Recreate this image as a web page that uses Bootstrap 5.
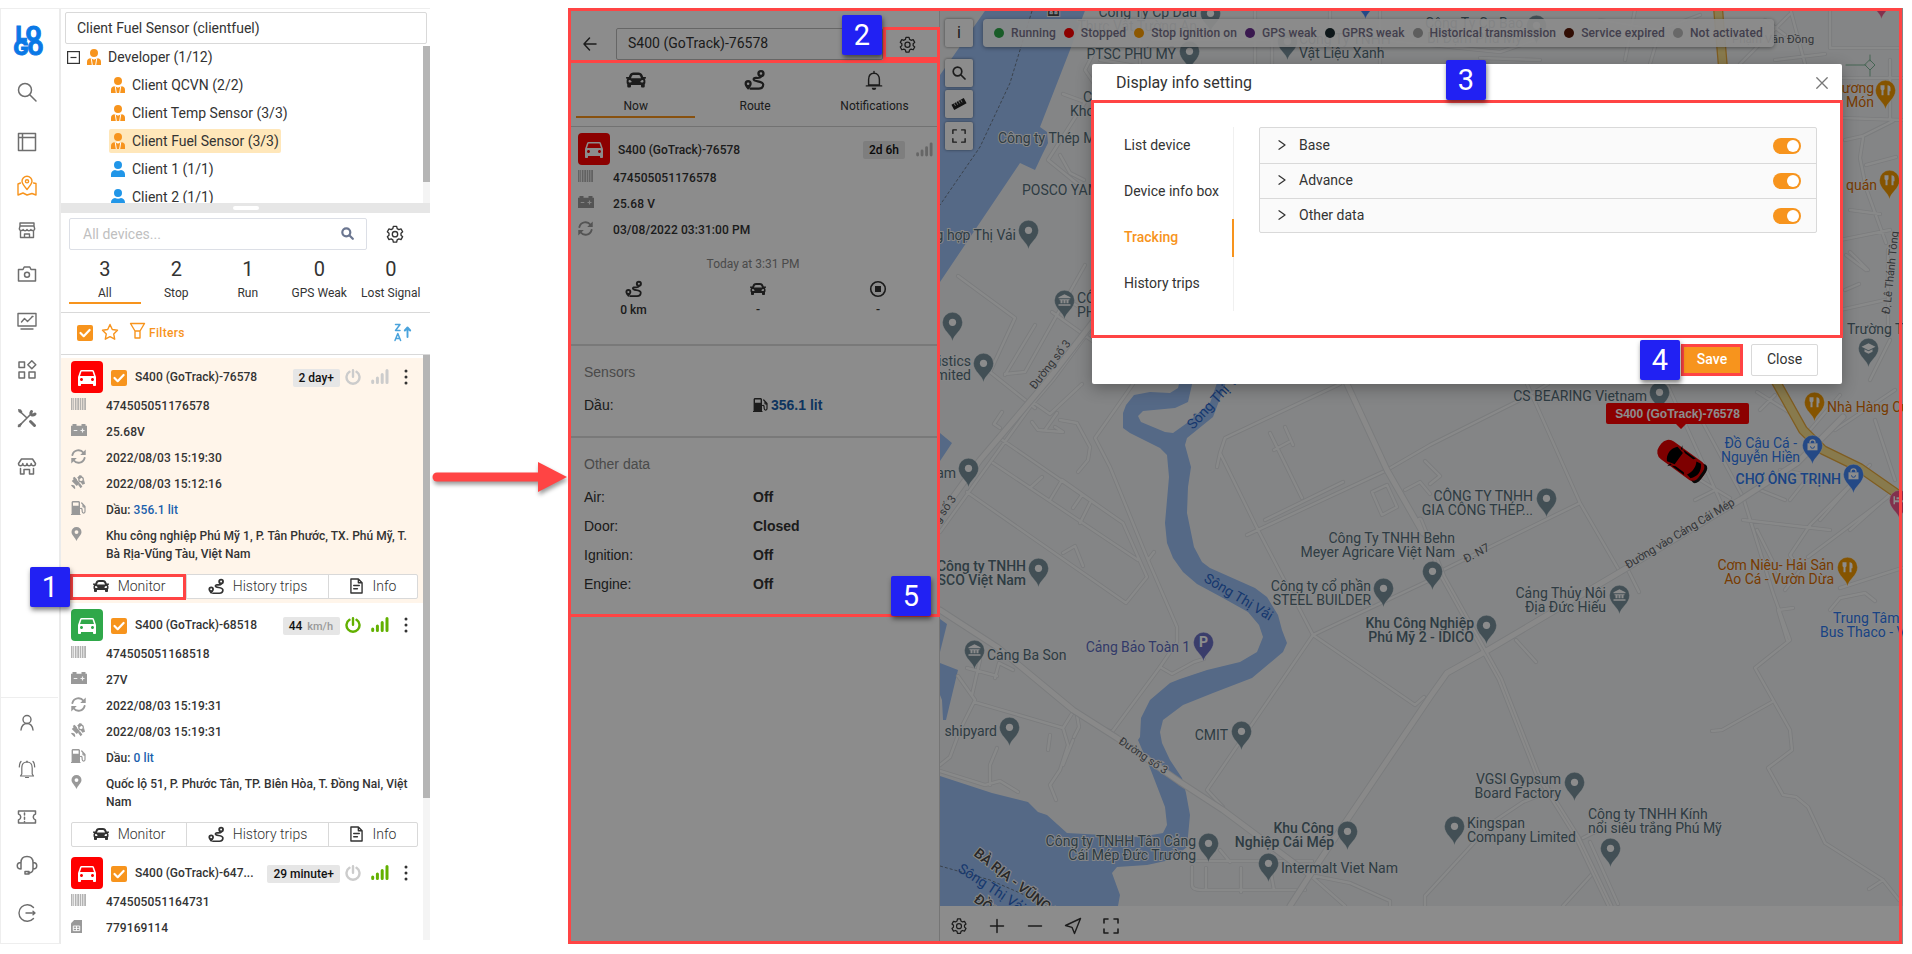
<!DOCTYPE html>
<html lang="en">
<head>
<meta charset="utf-8">
<title>Fleet monitor</title>
<meta name="viewport" content="width=device-width, initial-scale=1">
<link href="https://cdn.jsdelivr.net/npm/bootstrap@5.3.0/dist/css/bootstrap.min.css" rel="stylesheet">
<style>
body{font-family:Roboto,"Noto Sans",sans-serif;font-size:14px;line-height:22px;color:#333;background:#fff;width:1912px;height:954px;overflow:hidden;position:relative}
svg{display:block;flex:none}
.ln{fill:none;stroke:currentColor;stroke-linecap:round;stroke-linejoin:round}
.fleet-app{width:430px;height:936px;margin-top:8px;border-top:1px solid #eee}
.rail{width:61px;border-left:1px solid #eee;border-right:2px solid #ebebeb;border-bottom:1px solid #eee;color:#6e6e6e}
.rail-grid{display:grid;justify-items:center;align-items:end;width:52px}
.rail-top{grid-template-rows:46px 49px 50px 44px 44px 44px 47px 49px 48px 48px}
.rail-foot{grid-template-rows:36px 47px 48px 48px 48px;height:246px;border-top:1px solid #eee;width:57px;padding-right:5px;margin-top:auto;align-content:start}
.brand{font:800 20px/14px Inter,sans-serif;color:#0a78e6;letter-spacing:-.8px;-webkit-text-stroke:1px #0a78e6;text-align:center;margin-left:2px;width:32px}
.pane{width:369px}
.box-input{border:1px solid #d9d9d9;border-radius:2px;height:32px;line-height:30px;padding-left:11px}
.tree{height:158px}
.tree-row{height:28px;gap:7px}
.tree-sel{background:#ffe7ba;border-radius:2px;height:24px;gap:7px;padding:0 2px}
.tree-item{gap:7px;padding-left:2px}
.kid{padding-left:48px}
.thumb{width:7px;background:#b5b5b5}
.track{width:7px;background:#f4f4f4}
.split{height:10px;background:#e6e6e6}
.split i{width:26px;height:4px;border-radius:2px;background:#fff}
.stat{width:71.5px;text-align:center;border-bottom:2px solid transparent;height:51px}
.stat b{display:block;font-weight:400;font-size:20px;line-height:22px;padding-top:5px}
.stat span{font-size:12px;display:block;line-height:18px;margin-top:4px;white-space:nowrap}
.stat.on{border-color:#f7941d}
.orange{color:#f7941d}
.chk{width:16px;height:16px;background:#f7941d;border-radius:2px;color:#fff}
.dev{height:245px;margin-bottom:3px;padding:3px 5px 3px 10px;width:362px;font-size:12px;font-weight:500;color:#333}
.dev.sel{background:#fff5ea}
.sq{width:32px;height:32px;border-radius:4px;background:#f00;color:#fff}
.tag{background:#e6e6e6;border-radius:2px;height:18px;line-height:18px;padding:0 6px;font-size:12px;font-weight:500;color:#111}
.inf{height:26px;line-height:26px;letter-spacing:.09px}
.inf svg{margin-top:4px}
.inf svg[height="12"]{margin-top:5px}
.inf .ic{width:35px;color:#999;height:20px}
.addr{line-height:18px;padding-top:4px;height:44px;letter-spacing:.04px}
.addr .ic{width:35px;color:#999;flex:none}
.blue{color:#1a5fad}
.acts{border:1px solid #d9d9d9;border-radius:2px;height:25px;width:347px;margin-top:7px;background:#fff;font-size:14px;font-weight:300;color:#333}
.acts>div{display:flex;align-items:center;justify-content:center;gap:9px;line-height:20px}
.acts>div+div{border-left:1px solid #d9d9d9}
.live{width:1335px;height:936px;margin-top:8px;position:relative;overflow:hidden}
.track-panel{width:372px;border-right:1px solid #d5d5d5}
.tk{width:119.4px;text-align:center;font-size:12px;height:58px;border-bottom:2px solid transparent;line-height:18px}
.tk svg{margin:0 auto 7px}
.tk.on{border-color:#f7941d}
.detail{font-size:12px;font-weight:500;color:#333}
.arial{font-family:"Liberation Sans",Arial,sans-serif;font-size:14px}
.kv{height:29px;line-height:29px}
.kv span{width:169px}
.rule{height:2px;background:#dcdcdc}
.map-area{width:963px}
.foot-bar{height:38px;gap:14px;padding:1px 0 0 7px;color:#333}
.foot-bar svg{width:24px;height:24px}
.mbtn{width:28px;height:28px;background:#fff;border-radius:2px;box-shadow:0 0 3px rgba(0,0,0,.5)}
.ctl{left:377px;top:11px}
.legend{left:415px;top:11px;height:28px;width:791px;background:rgba(255,255,255,.9);border-radius:4px;box-shadow:0 1px 4px rgba(0,0,0,.4);padding-left:11px;font-size:12px;font-weight:500;color:#78738c;white-space:nowrap}
.legend i{width:10px;height:10px;border-radius:50%;margin-right:7px}
.legend span{margin-right:8px;letter-spacing:.1px}
.veil{inset:0;background:rgba(0,0,0,.45)}
.dlg{left:524px;top:56px;width:750px;height:320px;background:#fff;border-radius:2px;box-shadow:0 4px 16px rgba(0,0,0,.3)}
.dlg-head{height:37px;font-size:16px;line-height:36px;padding:0 14px 0 24px;color:#333}
.dlg-body{height:235px;padding:26px 25px 0 32px;color:#333}
.vtabs{width:111px;height:184px;border-right:1px solid #f0f0f0}
.vtabs div{height:38px;line-height:36px;margin-bottom:8px;margin-right:-1px}
.vtabs .on{color:#f7941d;font-weight:500;border-right:2px solid #f7941d}
.fold{width:558px;height:106px;border:1px solid #d9d9d9;border-radius:2px;background:#fafafa;margin-left:25px;flex:none}
.fold>div{height:35px;padding:0 15px 2px 17px;line-height:32px}
.fold>div+div{border-top:1px solid #d9d9d9;padding-bottom:3px}
.sw{width:28px;height:16px;border-radius:8px;background:#f7941d;padding:2px;margin-top:2px}
.sw i{width:12px;height:12px;border-radius:50%;background:#fff;margin-left:auto;display:block}
.dlg-foot{padding:8px 25px 0 0;gap:8px}
.b{height:32px;line-height:29px;text-align:center}
.b-save{width:62px;background:#f7941d;color:#fff;font-weight:500;border:3px solid #ff4444;line-height:25px}
.b-close{width:67px;border:1px solid #d9d9d9;border-radius:2px;color:#333}
.frame{position:absolute;border:3px solid #ff4444;pointer-events:none}
.num{position:absolute;width:40px;height:40px;background:#2121f3;border-radius:2px;color:#fff;font-size:29px;line-height:41px;text-align:center;box-shadow:1px 3px 5px rgba(0,0,0,.5)}
.map-svg text{font-family:Roboto,"Noto Sans",sans-serif;font-size:14px;fill:#546e7a;paint-order:stroke;stroke:#f4f6f7;stroke-width:2px;letter-spacing:-.02px}
.map-svg .e{text-anchor:end}
.map-svg .m{font-weight:500}
.map-svg .r{font-size:11.5px;fill:#5f6368}
.map-svg .o{fill:#d96c00}
.map-svg .bl{fill:#2f7af0}
.map-svg .w{fill:#2a66c8;stroke:none}
</style>
</head>
<body class="d-flex align-items-start">

<svg width="0" height="0" class="position-absolute" aria-hidden="true">
<symbol id="carf" viewBox="0 0 24 24"><path fill="currentColor" d="M18.92 6.01C18.72 5.42 18.16 5 17.5 5h-11c-.66 0-1.21.42-1.42 1.01L3 12v8c0 .55.45 1 1 1h1c.55 0 1-.45 1-1v-1h12v1c0 .55.45 1 1 1h1c.55 0 1-.45 1-1v-8l-2.08-5.99zM6.5 16c-.83 0-1.5-.67-1.5-1.5S5.67 13 6.5 13s1.5.67 1.5 1.5S7.33 16 6.5 16zm11 0c-.83 0-1.5-.67-1.5-1.5s.67-1.5 1.5-1.5 1.5.67 1.5 1.5-.67 1.5-1.5 1.5zM5 11l1.5-4.5h11L19 11H5z"/></symbol>
<symbol id="car" viewBox="0 0 512 512"><path fill="currentColor" d="M499.99 176h-59.87l-16.64-41.6C406.38 91.63 365.57 64 319.5 64h-127c-46.06 0-86.88 27.63-103.99 70.4L71.87 176H12.01C4.2 176-1.53 183.34.37 190.91l6 24C7.7 220.25 12.5 224 18.01 224h20.07C24.65 235.73 16 252.78 16 272v48c0 16.12 6.16 30.67 16 41.93V416c0 17.67 14.33 32 32 32h32c17.67 0 32-14.33 32-32v-32h256v32c0 17.67 14.33 32 32 32h32c17.67 0 32-14.33 32-32v-54.07c9.84-11.25 16-25.8 16-41.93v-48c0-19.22-8.65-36.27-22.07-48H494c5.51 0 10.31-3.75 11.64-9.09l6-24c1.89-7.57-3.84-14.91-11.65-14.91zm-352.06-17.83c7.29-18.22 24.94-30.17 44.57-30.17h127c19.63 0 37.28 11.95 44.57 30.17L384 208H128l19.93-49.83zM96 319.8c-19.2 0-32-12.76-32-31.9S76.8 256 96 256s48 28.71 48 47.85-28.8 15.95-48 15.95zm320 0c-19.2 0-48 3.19-48-15.95S396.8 256 416 256s32 12.76 32 31.9-12.8 31.9-32 31.9z"/></symbol>
<symbol id="route" viewBox="0 0 24 24"><path fill="currentColor" fill-rule="evenodd" d="M4.500 12A4 4 0 0 0 .6 16c0 2.700 3.900 6.500 3.900 6.500S8.400 18.700 8.400 16A4 4 0 0 0 4.500 12zm0 2.600a1.400 1.400 0 1 1 0 2.800 1.400 1.400 0 0 1 0-2.800zM18.500 1a4 4 0 1 0 0 8 4 4 0 0 0 0-8zm0 2.600a1.400 1.400 0 1 1 0 2.800 1.400 1.400 0 0 1 0-2.800z"/><path class="ln" stroke-width="2.400" d="M18.500 8.500c-1.500 3-8-.5-8 2.700 0 3.300 10.500 1 10.500 5.800 0 3.500-2.500 4.500-5 4.500H7"/></symbol>
<symbol id="gear" viewBox="0 0 24 24"><path class="ln" stroke-width="1.800" d="M9.800 1.800h4.400l.7 3 2.200 1.300 2.900-.9 2.200 3.800-2.200 2v2.600l2.200 2-2.200 3.800-2.900-.9-2.200 1.300-.7 3H9.800l-.7-3-2.200-1.300-2.900.9-2.200-3.800 2.200-2V11L1.800 9 4 5.200l2.900.9 2.200-1.300z"/><circle class="ln" stroke-width="1.800" cx="12" cy="12.300" r="3.600"/></symbol>
<symbol id="suit" viewBox="0 0 14 16"><path fill="currentColor" d="M7 0a4 4 0 1 0 0 8 4 4 0 0 0 0-8zM3 9.300C1 9.800 0 11 0 13v3h14v-3c0-2-1-3.200-3-3.700L7 10.500z"/><path stroke="#fff" stroke-width="1" fill="none" d="M4.300 9.500L5.300 16M9.700 9.500L8.700 16"/><path fill="#fff" d="M5.300 8.800h3.400L7.700 10.300H6.300z"/></symbol>
<symbol id="man" viewBox="0 0 14 16"><path fill="currentColor" d="M7 0a4 4 0 1 0 0 8 4 4 0 0 0 0-8zM4 9c-2.500.4-4 1.800-4 4.500V16h14v-2.500C14 10.800 12.500 9.400 10 9c-1.800 1-4.200 1-6 0z"/></symbol>
<symbol id="tick" viewBox="0 0 16 16"><path class="ln" stroke-width="2.200" stroke-linecap="butt" d="M3.500 8l3.200 3.200L12.600 5"/></symbol>
<symbol id="bar" viewBox="0 0 15 12"><path fill="currentColor" opacity=".75" d="M0 0h1.500v12H0zM2.200 0h.8v12h-.8zM3.800 0h1.700v12H3.800zM6.300 0h2v12h-2zM9 0h1v12H9zM10.700 0h1.800v12h-1.800zM13.200 0H15v12h-1.800z"/></symbol>
<symbol id="bat" viewBox="0 0 16 12"><path fill="currentColor" d="M1.500 0h4v1.800h5V0h4v1.800H16V12H0V1.800h1.500z"/><path stroke="#fff" stroke-opacity=".85" stroke-width="1.200" d="M2.700 6.500h3.600M9.500 6.500h4M11.500 4.500v4"/></symbol>
<symbol id="sync" viewBox="0 0 16 16"><path class="ln" stroke-width="2" d="M1.500 6.500A6.700 6.700 0 0 1 13.300 4M14.500 9.500A6.700 6.700 0 0 1 2.700 12"/><path fill="currentColor" d="M15.700.5v6H9.800zM.3 15.500v-6h5.900z"/></symbol>
<symbol id="sat" viewBox="0 0 16 16"><g fill="currentColor"><rect x="1.500" y="5.500" width="8" height="5" transform="rotate(45 5.500 8)"/><path d="M7 3l3-3 3 1-3 4zM11 8l4-2 1 4-3 1zM2 3.500L4 2l3 3-2 2zM10 9l3 4-2 2-3-4zM1 11l3 1 1 3-1 1-4-4z"/></g><circle cx="11.500" cy="5" r="2.600" fill="none" stroke="currentColor" stroke-width="1.400"/></symbol>
<symbol id="fuel" viewBox="0 0 15 14"><path fill="currentColor" fill-rule="evenodd" d="M1.500 0h6.500l1 1v12h.5v1H0v-1h.6V1zM2 1.500v3.300h5.600V1.500z"/><path class="ln" stroke-width="1.200" d="M9.500 7.500c2-.5 1.500 1.500 1.700 3 .2 2.200 2.800 2 2.800 0V5.500L10.700 2M12 3.500v2.200l2 .8"/></symbol>
<symbol id="loc" viewBox="0 0 12 16"><path fill="currentColor" fill-rule="evenodd" d="M6 0a5.700 5.700 0 0 0-5.700 5.800C.3 9.500 4.500 12 6 16c1.500-4 5.700-6.500 5.700-10.200A5.700 5.700 0 0 0 6 0zm0 3.600a2.200 2.200 0 1 1 0 4.400 2.200 2.200 0 0 1 0-4.400z"/></symbol>
<symbol id="sim" viewBox="0 0 12 16"><path fill="currentColor" d="M3.500 1H12v14H0V4.500z"/><path stroke="#fff" stroke-width="1" d="M2.500 7.500h7v5h-7zM2.500 10h7M6 7.500v5" fill="none"/></symbol>
<symbol id="power" viewBox="0 0 16 16"><path class="ln" stroke-width="2.400" d="M4.500 2.800a6.500 6.500 0 1 0 7 0M8 1.200v6.500"/></symbol>
<symbol id="sig" viewBox="0 0 18 15"><path class="ln" stroke-width="3" stroke-linecap="round" d="M1.700 12v1.400M6.400 9v4.400M11.200 5.500v7.900M16 1.500v11.900"/></symbol>
<symbol id="doc" viewBox="0 0 14 17"><path class="ln" stroke-width="1.500" d="M1 1h8l4 4v11H1zM9 1v4h4M4 8h6M4 11.500h4"/></symbol>
<symbol id="exp" viewBox="0 0 16 16"><path class="ln" stroke-linecap="butt" stroke-linejoin="miter" stroke-width="1.600" d="M1 5V1h4M11 1h4v4M15 11v4h-4M5 15H1v-4"/></symbol>
<symbol id="bell" viewBox="0 0 20 22"><path class="ln" stroke-width="1.600" d="M10 3c-4 0-6 3-6 7v6h12v-6c0-4-2-7-6-7zM1.500 17h17M10 1v2"/><path fill="currentColor" d="M7.500 19h5a2.500 2.500 0 0 1-5 0z"/></symbol>
<symbol id="dots" viewBox="0 0 4 16"><g fill="#333"><circle cx="2" cy="2" r="1.500"/><circle cx="2" cy="8" r="1.500"/><circle cx="2" cy="14" r="1.500"/></g></symbol>
<symbol id="pin" viewBox="-11 -11 22 32" overflow="visible"><path fill="currentColor" stroke="#fff" stroke-opacity=".45" stroke-width=".7" d="M0 19C-1 12-10 8.500-10 0a10 10 0 0 1 20 0C10 8.500 1 12 0 19z"/></symbol>
</svg>

<main class="fleet-app d-flex">
  <nav class="rail d-flex flex-column">
    <div class="rail-grid rail-top">
      <div class="brand">LO<br>GO</div>
      <svg width="24" height="24" viewBox="0 0 24 24" class="ln" stroke-width="1.500"><circle cx="10" cy="10" r="6.500"/><path d="M15 15l6 6"/></svg>
      <svg width="24" height="24" viewBox="0 0 24 24" class="ln" stroke-width="1.500"><path d="M3.500 3.500h17v17h-17zM7.500 3.500v17M3.500 7.500h17"/></svg>
      <svg width="24" height="24" viewBox="0 0 24 24" class="ln orange" stroke-width="1.400"><path d="M12 15.500C9 12 7 9.500 7 7.300a5 5 0 0 1 10 0c0 2.200-2 4.700-5 8.200z"/><circle cx="12" cy="7.300" r="1.600"/><path d="M5.500 9L3 10v11l5-2 4 2 5-1.500 4 1.500V9.500L18.500 9"/></svg>
      <svg width="24" height="24" viewBox="0 0 24 24" class="ln" stroke-width="1.400"><path d="M5 5h14v3H5zM5 8l-.7 3c0 2 3.500 2 3.800.5.500 1.700 3.500 1.700 3.900 0 .4 1.700 3.400 1.700 3.900 0 .3 1.500 3.800 1.500 3.800-.5L19 8M5.500 13v6.500h13V13M9.500 19v-3h5v3"/></svg>
      <svg width="24" height="24" viewBox="0 0 24 24" class="ln" stroke-width="1.500"><path d="M3.500 7.500H8l1.200-2.500h5.600L16 7.500h4.500v11.500h-17z"/><circle cx="12" cy="12.800" r="2.500"/></svg>
      <svg width="24" height="24" viewBox="0 0 24 24" class="ln" stroke-width="1.400"><path d="M3 4.500h18v12.500H3zM6 20h12M6.500 13l3-3.500 3 3 4.500-4.500M17 7.500h1"/></svg>
      <svg width="24" height="24" viewBox="0 0 24 24" class="ln" stroke-width="1.500"><path d="M4 4h5.500v5.500H4zM4 14h5.500v6H4zM14 14h6v6h-6zM16.800 2.700l4 4-4 4-4-4z"/></svg>
      <svg width="24" height="24" viewBox="0 0 24 24"><path class="ln" stroke-width="1.600" d="M5 5.500L12 12M3.500 20.500l12-12"/><path class="ln" stroke-width="3" d="M15.500 15.500l4 4M16.500 5.500c-2 3 1 4.500 3.500 2.500"/><path fill="currentColor" d="M3 3l3 .5L7.500 6 6 7.500 3.500 6zM2.500 19l3.500-2 1 1-2 3.500z"/></svg>
      <svg width="24" height="24" viewBox="0 0 24 24" class="ln" stroke-width="1.500"><path d="M6.500 5h11l3 4.500c0 3-4 3-4.300 0 0 3-4.200 3-4.200 0 0 3-4.200 3-4.200 0-.3 3-4.300 3-4.300 0zM5.500 14.500V20H9v-4.500h5.500V20h4v-5.500"/></svg>
    </div>
    <div class="rail-grid rail-foot">
      <svg width="24" height="24" viewBox="0 0 24 24" class="ln" stroke-width="1.400"><circle cx="12" cy="9.500" r="4"/><path d="M6 20c.5-3.700 2.500-6.500 6-6.500s5.500 2.800 6 6.500"/></svg>
      <svg width="24" height="24" viewBox="0 0 24 24" class="ln" stroke-width="1.200"><path d="M12 5c-3.500 0-5.200 2.500-5.200 6v6L5.500 19h13l-1.300-2v-6c0-3.500-1.700-6-5.200-6zM12 4v1M10.500 20.500h3M6 4.500C4.500 6 4.300 8 4.300 10M18 4.500c1.500 1.500 1.700 3.500 1.700 5.500"/></svg>
      <svg width="24" height="24" viewBox="0 0 24 24" class="ln" stroke-width="1.500"><path d="M3.500 6h17v3c-3 1-3 5 0 6v3h-17v-3c3-1 3-5 0-6z"/><path stroke-dasharray="2 2.300" d="M9.500 8v9"/></svg>
      <svg width="24" height="24" viewBox="0 0 24 24" class="ln" stroke-width="1.500"><path d="M6 9.500c0-3.500 2-6 6-6s6 2.500 6 6M6 9.500v6.500c-5 0-5-6.500 0-6.500zM18 9.500v6.500c5 0 5-6.500 0-6.500zM18 16c0 2.500-2 4-5 4"/><rect x="10" y="18.500" width="4" height="2.500"/></svg>
      <svg width="24" height="24" viewBox="0 0 24 24" class="ln" stroke-width="1.400"><path d="M18.500 6.500a8.300 8.300 0 1 0 0 11M11 12h9M18 10.300l2 1.700-2 1.700"/></svg>
    </div>
  </nav>

  <section class="pane d-flex flex-column">
    <div class="box-input" style="margin:3px 3px 2px 4px">Client Fuel Sensor (clientfuel)</div>
    <div class="d-flex tree overflow-hidden">
      <div class="flex-grow-1" style="margin-top:-3px">
        <div class="tree-row d-flex align-items-center" style="padding-left:6px">
          <svg width="13" height="13" viewBox="0 0 13 13" fill="none" stroke="#333" stroke-width="1.200"><rect x=".6" y=".6" width="11.800" height="11.800"/><path d="M3.500 6.500h6"/></svg>
          <svg width="14" height="16" class="orange"><use href="#suit"/></svg><span>Developer (1/12)</span></div>
        <div class="tree-row kid d-flex align-items-center"><div class="d-flex align-items-center tree-item"><svg width="14" height="16" class="orange"><use href="#suit"/></svg>Client QCVN (2/2)</div></div>
        <div class="tree-row kid d-flex align-items-center"><div class="d-flex align-items-center tree-item"><svg width="14" height="16" class="orange"><use href="#suit"/></svg>Client Temp Sensor (3/3)</div></div>
        <div class="tree-row kid d-flex align-items-center"><div class="tree-sel d-flex align-items-center"><svg width="14" height="16" class="orange"><use href="#suit"/></svg>Client Fuel Sensor (3/3)</div></div>
        <div class="tree-row kid d-flex align-items-center"><div class="d-flex align-items-center tree-item"><svg width="14" height="16" style="color:#2196e8"><use href="#man"/></svg>Client 1 (1/1)</div></div>
        <div class="tree-row kid d-flex align-items-center"><div class="d-flex align-items-center tree-item"><svg width="14" height="16" style="color:#2196e8"><use href="#man"/></svg>Client 2 (1/1)</div></div>
      </div>
      <div class="track"><div class="thumb" style="height:136px"></div></div>
    </div>
    <div class="split d-flex justify-content-center align-items-center"><i></i></div>
    <div class="d-flex align-items-center" style="padding:5px 0 0 8px">
      <div class="box-input d-flex align-items-center justify-content-between" style="width:298px;color:#bfbfbf;padding:0 12px 0 13px;border-color:#dcdfe6">All devices...<svg width="13" height="13" viewBox="0 0 13 13" class="ln" stroke-width="2.200" style="color:#6b7690"><circle cx="5.300" cy="5.300" r="4"/><path d="M8.500 8.500l3.300 3.300"/></svg></div>
      <svg width="18" height="18" style="margin-left:19px"><use href="#gear"/></svg>
    </div>
    <div class="d-flex" style="padding:3px 0 8px 8px;border-bottom:1px solid #d9d9d9">
      <div class="stat on"><b>3</b><span>All</span></div><div class="stat"><b>2</b><span>Stop</span></div><div class="stat"><b>1</b><span>Run</span></div><div class="stat"><b>0</b><span>GPS Weak</span></div><div class="stat"><b>0</b><span>Lost Signal</span></div>
    </div>
    <div class="d-flex align-items-center orange" style="height:42px;padding:0 18px 0 16px;border-bottom:1px solid #d9d9d9">
      <div class="chk"><svg width="16" height="16"><use href="#tick"/></svg></div>
      <svg width="18" height="18" viewBox="0 0 18 18" class="ln" stroke-width="1.400" style="margin:-3px 0 0 8px"><path d="M9 1.500l2.300 5 5.200.7-3.800 3.700 1 5.300L9 13.600l-4.700 2.600 1-5.300L1.500 7.200l5.200-.7z"/></svg>
      <svg width="17" height="18" viewBox="0 0 17 18" class="ln" stroke-width="1.400" style="margin:-5px 3px 0 10px"><path d="M1.500 1.500h14l-4.500 7.500v7H6V9zM6 9h5"/></svg>
      <span style="font-size:12px;font-weight:500;letter-spacing:.3px">Filters</span>
      <svg width="18" height="19" viewBox="0 0 18 19" class="ln ms-auto" stroke-width="1.500" style="color:#4aa3dc;margin-top:-1px"><path d="M1.500 1.500H6l-4.500 6H6M1 17.500l2.800-7 2.800 7M2 15.500h3.600"/><path d="M13.500 14V5M10.800 7.500l2.700-3 2.700 3" stroke-width="1.900"/></svg>
    </div>
    <div class="d-flex overflow-hidden flex-grow-1" style="margin-bottom:4px">
      <div style="padding-top:3px">
        <article class="dev sel">
          <div class="d-flex align-items-center">
            <div class="sq d-flex align-items-center justify-content-center"><svg width="24" height="24"><use href="#carf"/></svg></div>
            <div class="chk" style="margin:2px 8px 0 8px"><svg width="16" height="16"><use href="#tick"/></svg></div><span style="padding-top:1px">S400 (GoTrack)-76578</span>
            <div class="ms-auto d-flex align-items-center pt-1" style="margin-top:-2px"><div class="tag">2 day+</div>
            <svg width="16" height="16" style="margin:-2px 10px 0 5px;color:#ccc"><use href="#power"/></svg><svg width="18" height="15" style="color:#ccc;margin-top:-2px"><use href="#sig"/></svg><svg width="4" height="16" style="margin:-2px 10px 0 15px"><use href="#dots"/></svg></div>
          </div>
          <div class="inf d-flex"><div class="ic"><svg width="15" height="12"><use href="#bar"/></svg></div>474505051176578</div>
          <div class="inf d-flex"><div class="ic"><svg width="16" height="12"><use href="#bat"/></svg></div>25.68V</div>
          <div class="inf d-flex"><div class="ic"><svg width="15" height="15"><use href="#sync"/></svg></div>2022/08/03 15:19:30</div>
          <div class="inf d-flex"><div class="ic"><svg width="14" height="14"><use href="#sat"/></svg></div>2022/08/03 15:12:16</div>
          <div class="inf d-flex"><div class="ic"><svg width="15" height="14"><use href="#fuel"/></svg></div>Dầu:&nbsp;<span class="blue">356.1 lit</span></div>
          <div class="addr d-flex"><div class="ic"><svg width="11" height="14"><use href="#loc"/></svg></div><div>Khu công nghiệp Phú Mỹ 1, P. Tân Phước, TX. Phú Mỹ, T.<br>Bà Rịa-Vũng Tàu, Việt Nam</div></div>
          <div class="acts d-flex"><div style="width:114px"><svg width="16" height="16"><use href="#car"/></svg>Monitor</div><div style="width:142px;gap:8px"><svg width="17" height="17"><use href="#route"/></svg>History trips</div><div class="flex-grow-1" style="gap:10px"><svg width="13" height="16"><use href="#doc"/></svg>Info</div></div>
        </article>
        <article class="dev">
          <div class="d-flex align-items-center">
            <div class="sq d-flex align-items-center justify-content-center" style="background:#2fa84a"><svg width="24" height="24"><use href="#carf"/></svg></div>
            <div class="chk" style="margin:2px 8px 0 8px"><svg width="16" height="16"><use href="#tick"/></svg></div><span style="padding-top:1px">S400 (GoTrack)-68518</span>
            <div class="ms-auto d-flex align-items-center pt-1" style="margin-top:-2px"><div class="tag" style="padding-right:7px">44 <span style="color:#999;font-size:11px;padding-left:2px">km/h</span></div>
            <svg width="16" height="16" style="margin:-2px 10px 0 5px;color:#62b000"><use href="#power"/></svg><svg width="18" height="15" style="color:#62b000;margin-top:-2px"><use href="#sig"/></svg><svg width="4" height="16" style="margin:-2px 10px 0 15px"><use href="#dots"/></svg></div>
          </div>
          <div class="inf d-flex"><div class="ic"><svg width="15" height="12"><use href="#bar"/></svg></div>474505051168518</div>
          <div class="inf d-flex"><div class="ic"><svg width="16" height="12"><use href="#bat"/></svg></div>27V</div>
          <div class="inf d-flex"><div class="ic"><svg width="15" height="15"><use href="#sync"/></svg></div>2022/08/03 15:19:31</div>
          <div class="inf d-flex"><div class="ic"><svg width="14" height="14"><use href="#sat"/></svg></div>2022/08/03 15:19:31</div>
          <div class="inf d-flex"><div class="ic"><svg width="15" height="14"><use href="#fuel"/></svg></div>Dầu:&nbsp;<span class="blue">0 lit</span></div>
          <div class="addr d-flex"><div class="ic"><svg width="11" height="14"><use href="#loc"/></svg></div><div>Quốc lộ 51, P. Phước Tân, TP. Biên Hòa, T. Đồng Nai, Việt<br>Nam</div></div>
          <div class="acts d-flex"><div style="width:114px"><svg width="16" height="16"><use href="#car"/></svg>Monitor</div><div style="width:142px;gap:8px"><svg width="17" height="17"><use href="#route"/></svg>History trips</div><div class="flex-grow-1" style="gap:10px"><svg width="13" height="16"><use href="#doc"/></svg>Info</div></div>
        </article>
        <article class="dev" style="height:auto;margin:0">
          <div class="d-flex align-items-center">
            <div class="sq d-flex align-items-center justify-content-center"><svg width="24" height="24"><use href="#carf"/></svg></div>
            <div class="chk" style="margin:2px 8px 0 8px"><svg width="16" height="16"><use href="#tick"/></svg></div><span style="padding-top:1px">S400 (GoTrack)-647...</span>
            <div class="ms-auto d-flex align-items-center pt-1" style="margin-top:-2px"><div class="tag">29 minute+</div>
            <svg width="16" height="16" style="margin:-2px 10px 0 5px;color:#ccc"><use href="#power"/></svg><svg width="18" height="15" style="color:#62b000;margin-top:-2px"><use href="#sig"/></svg><svg width="4" height="16" style="margin:-2px 10px 0 15px"><use href="#dots"/></svg></div>
          </div>
          <div class="inf d-flex"><div class="ic"><svg width="15" height="12"><use href="#bar"/></svg></div>474505051164731</div>
          <div class="inf d-flex"><div class="ic"><svg width="11" height="15"><use href="#sim"/></svg></div>779169114</div>
        </article>
      </div>
      <div class="track"><div class="thumb" style="height:443px"></div></div>
    </div>
  </section>
</main>

<svg width="138" height="46" viewBox="430 454 138 46" style="margin-top:454px"><g style="filter:drop-shadow(1px 3px 2px rgba(0,0,0,.4))"><path d="M437 477h104" stroke="#ff4444" stroke-width="9" stroke-linecap="round"/><path d="M538 462l29 15-29 15z" fill="#ff4444"/></g></svg>

<section class="live d-flex">
  <aside class="track-panel">
    <div class="d-flex align-items-center" style="padding:20px 0 0 14px;height:52px">
      <svg width="14" height="14" viewBox="0 0 14 14" class="ln" stroke-width="1.500" style="margin:0 20px 0 1px"><path d="M13 7H1M6.500 1L1 7l5.500 6"/></svg>
      <div class="box-input" style="width:267px;border-color:#bbb;margin-left:-1px;line-height:29px">S400 (GoTrack)-76578</div>
      <svg width="17" height="17" style="margin-left:16px"><use href="#gear"/></svg>
    </div>
    <div class="d-flex" style="padding:0 0 8px 8px;border-bottom:1px solid #d0d0d0">
      <div class="tk on"><svg width="20" height="20" style="margin-top:10px"><use href="#car"/></svg>Now</div>
      <div class="tk"><svg width="22" height="22" style="margin-top:9px;margin-bottom:6px"><use href="#route"/></svg>Route</div>
      <div class="tk"><svg width="18" height="21" style="margin-top:10px;margin-bottom:6px"><use href="#bell"/></svg>Notifications</div>
    </div>
    <div class="detail" style="padding:6px 6px 0 10px;height:217px">
      <div class="d-flex align-items-center"><div class="sq d-flex align-items-center justify-content-center me-2"><svg width="24" height="24"><use href="#carf"/></svg></div><span style="padding-top:2px">S400 (GoTrack)-76578</span><div class="tag ms-auto" style="margin-top:2px">2d 6h</div><svg width="17" height="15" style="color:#bbb;margin-left:11px"><use href="#sig"/></svg></div>
      <div class="inf d-flex"><div class="ic"><svg width="15" height="12"><use href="#bar"/></svg></div>474505051176578</div>
      <div class="inf d-flex"><div class="ic"><svg width="16" height="12"><use href="#bat"/></svg></div>25.68 V</div>
      <div class="inf d-flex"><div class="ic"><svg width="15" height="15"><use href="#sync"/></svg></div>03/08/2022 03:31:00 PM</div>
      <div class="text-center" style="margin-top:10px;color:#888;font-weight:400;padding-right:5px">Today at 3:31 PM</div>
      <div class="d-flex text-center" style="margin-top:5px">
        <div style="width:111px"><svg width="18" height="18" class="mx-auto" style="margin-bottom:1px"><use href="#route"/></svg>0 km</div>
        <div style="width:138px"><svg width="16" height="16" class="mx-auto" style="margin:1px 0 2px"><use href="#car"/></svg>-</div>
        <div style="width:102px"><svg width="18" height="18" viewBox="0 0 18 18" class="mx-auto" style="margin-bottom:1px"><circle cx="9" cy="9" r="7.300" fill="none" stroke="#333" stroke-width="1.600"/><rect x="6" y="6" width="6" height="6" fill="#333"/></svg>-</div>
      </div>
    </div>
    <div class="rule"></div>
    <div class="arial" style="padding:14px 16px 0;height:90px"><div style="color:#888;line-height:24px">Sensors</div><div class="kv d-flex align-items-center" style="margin-top:7px"><span>Dầu:</span><svg width="15" height="14" style="margin:-2px 3px 0 0"><use href="#fuel"/></svg><b class="blue">356.1 lit</b></div></div>
    <div class="rule"></div>
    <div class="arial" style="padding:14px 16px 0"><div style="color:#888;line-height:24px;margin-bottom:7px">Other data</div>
      <div class="kv d-flex"><span>Air:</span><b>Off</b></div><div class="kv d-flex"><span>Door:</span><b>Closed</b></div><div class="kv d-flex"><span>Ignition:</span><b>Off</b></div><div class="kv d-flex"><span>Engine:</span><b>Off</b></div></div>
  </aside>

  <div class="map-area">
    <svg class="map-svg" width="963" height="898" viewBox="940 8 963 898">
      <rect x="940" y="8" width="963" height="898" fill="#f1f3f4"/>
      <g fill="#9bbff4">
        <path d="M987 8H1086L1070 50 1040 127 1047 132 1048 143 1043 153 1035 170 1020 163 940 282V75z"/>
        <path d="M940 433l12 10-12 18zM940 619l7 5-7 28zM940 663l18 7-12 50h-3l-1-20-2-5z"/>
        <path d="M1180 380L1178 388 1170 393 1150 392 1134 395 1126 405 1123 413 1123 428 1130 433 1160 448 1167 455 1169 477 1165 523 1167 543 1173 558 1183 572 1197 584 1223 598 1248 612 1259 625 1263 637 1257 652 1240 662 1207 670 1180 679 1170 683 1150 700 1141 718 1140 737 1138 740 1150 768 1165 807 1167 825 1163 833 1140 837 1067 833 1047 815 1038 812 1028 802 992 793 940 776V906H1118L1120 895 1112 873 1117 867 1147 865 1170 860 1187 847 1190 815 1186 793 1182 778 1170 760 1162 743 1160 732 1163 720 1183 705 1213 693 1252 678 1283 652 1287 643 1282 630 1278 615 1267 597 1255 588 1210 568 1202 562 1194 547 1187 513 1188 487 1191 467 1185 445 1187 438 1213 417 1227 380H1218L1210 403 1187 423 1173 433 1165 432 1141 422 1138 416 1143 411 1175 408 1188 402 1193 380z"/>
      </g>
      <path d="M1032 11L1020 50 1010 83 980 147 940 205M940 866L990 880 1050 906" fill="none" stroke="#6b7a8c" stroke-dasharray="3 2"/>
      <g fill="none" stroke-linejoin="round" stroke-linecap="round">
        <defs>
          <path id="streets-inland" d="M940 532L1030 407 1053 380 1090 330M998 437L1123 523 1147 577 1126 603 967 492M993 463L1138 560M1050 500l12-20M1080 523l10-20M1062 480L1123 523M1030 488l12-11M1073 508l9-13M1000 428l-6-4 8-12M1133 384L1095 438 1110 467 1148 560 1177 627V642L1160 667 1112 732 1100 727M1060 420l17 3 13 24-2 13-10 12M1032 422l6 8 25 2-8-5M1045 430l12-17M1063 553l12-7 8 20M1148 560l6-8M1030 400l20 14 32-30M1340 384L1225 438 1220 453 1258 530 1300 610 1313 635 1283 679 1207 790 1223 807M1247 535L1387 470 1430 445 1520 400 1548 384M1265 520L1343 482M1270 433L1302 498M1285 427l8 18M1274 450l15-8M1313 635L1430 580 1443 570 1580 503M1313 635L1415 705 1424 697M1527 384L1580 503 1620 572M1627 568l12 24M1667 384L1723 507M1703 423L1743 497 1773 593 1790 640 1755 668 1790 730 1792 750 1768 768 1783 795 1796 797 1808 807 1825 843 1883 880 1899 900M1772 702l-50 28-10 1M1883 880l-14 9M1787 640l-9-30 15-2M1743 520L1830 530M1757 530l25 50M1785 590l15-20-10-15 20-30 60-60M1820 520l40-45-20-20M1808 557l80-60M1850 530l45-40M1780 470l30 5-20 25M1760 490l25 10M1700 480l30 18M1695 500l20-10M1372 492l15-7 10 22-15 8zM1405 490l15-8 10 12M1516 640l20 22M1220 453l-3 14M1430 484l10-8-15-15"/>
          <path id="streets-edge" d="M958 676L975 700 960 730 950 757 940 765M940 771L985 785 1000 781 1018 792M990 785V765L997 748M974 702L1063 728 1073 712M1063 728L1068 745 1060 770 1050 785 1056 800M1073 740l-10 25M1048 750l2-15M967 668l30 8M980 660l-8 35M995 678l4-15 14 7M1077 715l2 12-5 10M1160 667l12 7 22-12 10-3M1192 861h120M1192 867v18q0 5 10 5h103M1206 868v22M1241 868v24M1270 868l4 22M1220 850l10 12M1310 875l40 8 40 18v6M1310 875l35 31M1425 906v-10l68-74 30-20 20-8M1563 906l30-33M1583 838l12-6M1590 842l28 62M1085 265L1025 372 1005 374M958 276L1015 318 990 372 1035 408M1035 325l-30 50M1062 296l20 13M1052 312l70 50M1100 40L1085 70 1095 85M1100 60l60 10M1063 94l22 8M1085 102L1048 160 1085 190M1060 155l10 18 14 7M1140 8v60M1152 40h120v24M1255 8v60M1380 8v56M1380 40l120 12 60-20M1330 8v35M1480 58l60 2M1600 20l60 10-10 34M1625 60l10-50M1660 30l40-15M1740 64l50-50M1765 20l20 15M1775 60l50-6M1790 8l15 56M1830 8v40h70M1843 78h59M1843 118l60 2M1890 60v60M1863 138l-3 20 6 30 20 55M1845 140l18-4 30-15M1866 165l30-8M1850 210l30 4M1840 240l50-10M1846 255l20 15M1850 252l18 18M1888 250l0 80M1840 310l45-10M1845 290l14-6M1890 340l-20 40M1757 392l35 22M1760 410l15-15M1810 430l30-35M1835 430l60-40M1875 420l20 60M1840 588l62-20M1830 610l10-12 25-5 10 8"/>
        </defs>
        <g stroke="#dfe1e4" stroke-width="4.200"><use href="#streets-inland"/><use href="#streets-edge"/></g>
        <g stroke="#f8f9fa" stroke-width="2.400"><use href="#streets-inland"/><use href="#streets-edge"/></g>
        <path stroke="#dfe1e4" stroke-width="7" d="M940 515L980 460 1048 380 1110 300M940 610L997 647 1073 710 1117 738 1180 782 1223 810 1310 875 1290 906M1310 875L1347 820 1430 697 1447 673 1483 653 1620 572 1740 500 1797 463 1843 417M1347 384L1387 470 1423 533M1420 520L1443 577 1500 679 1537 773 1577 837 1610 906M1720 8l2 60"/>
        <path stroke="#f9fafa" stroke-width="5" d="M940 515L980 460 1048 380 1110 300M940 610L997 647 1073 710 1117 738 1180 782 1223 810 1310 875 1290 906M1310 875L1347 820 1430 697 1447 673 1483 653 1620 572 1740 500 1797 463 1843 417M1347 384L1387 470 1423 533M1420 520L1443 577 1500 679 1537 773 1577 837 1610 906"/>
        <path stroke="#e6e8ea" stroke-width="1" d="M1420 520L1443 577 1500 679 1537 773 1577 837 1610 906"/>
        <path stroke="#e8a93c" stroke-width="10" d="M1775 380L1803 430 1823 450 1860 468 1903 498M1718 8l5 60"/>
        <path stroke="#f8df8c" stroke-width="7.500" d="M1775 380L1803 430 1823 450 1860 468 1903 498M1718 8l5 60"/>
        <path stroke="#7fb797" d="M1846 65h20M1870 55v6M1870 70v6M1870 60l5 5-5 5-5-5z"/>
      </g>
      <g fill="#fff" id="pins"></g>
      <text class="e" x="1197" y="17">Công Ty Cp Dầu</text><text class="e" x="1197" y="31">Thực Vật Tường An</text>
      <text class="e" x="1176" y="59">PTSC PHÚ MỸ</text><text x="1299" y="44">Công Ty TNHH</text><text x="1299" y="58">Vật Liệu Xanh</text>
      <text x="1425" y="28">Công Ty Cp Bao</text><text x="1427" y="43">Bì Đạm Phú Mỹ</text>
      <text x="1083" y="102">C</text><text x="1070" y="116">Kho</text><text x="998" y="143">Công ty Thép M</text><text x="1022" y="195">POSCO YAMATO</text>
      <text class="e" x="1016" y="240">Tổng hợp Thị Vải</text><text x="1077" y="303">CÔNG</text><text x="1077" y="317">PHẦN</text>
      <text class="e" x="971" y="366">Logistics</text><text class="e" x="971" y="380">Limited</text><text class="e" x="956" y="478">Nam</text>
      <text class="e m" x="1026" y="571">Công ty TNHH</text><text class="e m" x="1026" y="585">POSCO Việt Nam</text>
      <text x="987" y="660">Cảng Ba Son</text><text class="e" x="1190" y="652" style="fill:#5c6bc0;letter-spacing:-.1px">Cảng Bảo Toàn 1</text>
      <text class="e" x="1371" y="591">Công ty cổ phần</text><text class="e" x="1371" y="605">STEEL BUILDER</text>
      <text class="e m" x="1474" y="628">Khu Công Nghiệp</text><text class="e m" x="1474" y="642">Phú Mỹ 2 - IDICO</text>
      <text class="e" x="1455" y="543">Công Ty TNHH Behn</text><text class="e" x="1455" y="557">Meyer Agricare Việt Nam</text>
      <text class="e" x="1647" y="401">CS BEARING Vietnam</text><text class="e" x="1533" y="501">CÔNG TY TNHH</text><text class="e" x="1533" y="515">GIA CÔNG THÉP...</text>
      <text class="e" x="1606" y="598">Cảng Thủy Nội</text><text class="e" x="1606" y="612">Địa Đức Hiếu</text>
      <text class="e o" x="1834" y="570">Cơm Niêu- Hải Sản</text><text class="e o" x="1834" y="584">Ao Cá - Vườn Dừa</text>
      <text class="bl" x="1833" y="623">Trung Tâm</text><text class="bl" x="1820" y="637">Bus Thaco - Vũng</text>
      <text class="e bl" x="1797" y="448">Đồ Câu Cá -</text><text class="e bl" x="1800" y="462">Nguyễn Hiền</text><text class="e bl m" x="1841" y="484">CHỢ ÔNG TRỊNH</text>
      <text class="o" x="1827" y="412">Nhà Hàng Cua</text><text class="e o" x="1874" y="93">Hương</text><text class="e o" x="1874" y="107">Món</text><text class="e o" x="1877" y="190">quán</text>
      <text x="1847" y="334">Trường TH</text>
      <text class="e" x="997" y="736">shipyard</text><text class="e" x="1228" y="740">CMIT</text><text class="e" x="1196" y="846">Công ty TNHH Tân Cảng</text><text class="e" x="1196" y="860">Cái Mép Đức Trường</text>
      <text class="e m" x="1334" y="833">Khu Công</text><text class="e m" x="1334" y="847">Nghiệp Cái Mép</text><text x="1281" y="873">Intermalt Viet Nam</text>
      <text class="e" x="1561" y="784">VGSI Gypsum</text><text class="e" x="1561" y="798">Board Factory</text><text x="1467" y="828">Kingspan</text><text x="1467" y="842">Company Limited</text>
      <text x="1588" y="819">Công ty TNHH Kính</text><text x="1588" y="833">nổi siêu trắng Phú Mỹ</text>
      <text class="r" x="1732" y="43">Phạm Văn Đồng</text>
      <text class="r" transform="translate(1628 569) rotate(-31)" style="letter-spacing:-.2px">Đường vào Cảng Cái Mép</text>
      <text class="r" transform="translate(1466 563) rotate(-28)">Đ. N7</text>
      <text class="r" transform="translate(1889 315) rotate(-75)">Đ. </text><text class="r" transform="translate(1891 303) rotate(-84)" style="font-size:11px">Lê Thánh Tông</text>
      <text class="r" transform="translate(1035 390) rotate(-52)">Đường số 3</text><text class="r" transform="translate(939 524) rotate(-55)">g số 3</text>
      <text class="r" transform="translate(1118 743) rotate(34)" style="font-size:11px">Đường số 3</text>
      <text class="w" transform="translate(1203 581) rotate(31)">Sông Thị Vải</text><text class="w" transform="translate(1193 430) rotate(-47)">Sông Thị Vải</text>
      <text class="w" transform="translate(957 871) rotate(33)">Sông Thị Vải</text>
      <g style="font-weight:500"><text transform="translate(973 855) rotate(38)" style="fill:#4a4a4a">BÀ RỊA - VŨNG TÀU</text><text transform="translate(973 901) rotate(38)" style="fill:#4a4a4a">ĐỒNG NAI</text><text transform="translate(1059 17) rotate(-90)" style="fill:#4a4a4a">B</text></g>
      <path fill="#f00" d="M1608 403h139a2 2 0 0 1 2 2v17a2 2 0 0 1-2 2h-61l-5 5-5-5h-68a2 2 0 0 1-2-2v-17a2 2 0 0 1 2-2z"/>
      <text x="1677.500" y="418" text-anchor="middle" style="font:bold 12px 'Liberation Sans',Arial,sans-serif;fill:#fff;stroke:none;letter-spacing:0">S400 (GoTrack)-76578</text>
      <g transform="translate(1682 461) rotate(36)"><rect x="-27" y="-11" width="53" height="22" rx="9" fill="#e60000"/><rect x="17" y="-11" width="9" height="22" rx="7" fill="#111"/><rect x="14" y="-10" width="9" height="20" rx="6" fill="#e60000"/><path d="M-12-9c-5 5-5 13 0 18l8-2v-14zM12-8c3 5 3 11 0 16l5 1c5-6 5-12 0-18zM-6-10L10-10 8-8-2-8zM-6 10L10 10 8 8-2 8zM-9-13l3 4h-2zM-9 13l3-4h-2z" fill="#000"/></g>
    </svg>
    <div class="foot-bar d-flex align-items-center bg-white">
      <svg viewBox="0 0 32 32"><use href="#gear" x="5" y="5" width="22" height="22"/></svg>
      <svg viewBox="0 0 24 24" class="ln" stroke-width="1.500"><path d="M12 5.500v13M5.500 12h13"/></svg>
      <svg viewBox="0 0 24 24" class="ln" stroke-width="1.500"><path d="M5.500 12h13"/></svg>
      <svg viewBox="0 0 24 24" class="ln" stroke-width="1.400"><path d="M19.500 4.500L4.500 11.500l6.500 1.800 2.500 6.200z"/></svg>
      <svg viewBox="0 0 24 24"><use href="#exp" x="4" y="4" width="16" height="16"/></svg>
    </div>
  </div>

  <div class="position-absolute ctl">
    <div class="mbtn d-flex align-items-center justify-content-center" style="margin-bottom:12px;font-size:16px">i</div>
    <div class="mbtn d-flex align-items-center justify-content-center" style="margin-bottom:3px"><svg width="14" height="14" viewBox="0 0 14 14" class="ln" stroke-width="1.700"><circle cx="5.500" cy="5.500" r="4.300"/><path d="M9 9l4 4"/></svg></div>
    <div class="mbtn d-flex align-items-center justify-content-center" style="margin-bottom:4px"><svg width="16" height="14" viewBox="0 0 16 14"><g transform="rotate(-28 8 7)"><rect x="1" y="4" width="14" height="6" fill="#222"/><path stroke="#ddd" stroke-width=".8" d="M4 4v3M6.500 4v3M9 4v3M11.500 4v3"/></g></svg></div>
    <div class="mbtn d-flex align-items-center justify-content-center"><svg width="14" height="14"><use href="#exp"/></svg></div>
  </div>
  <div class="legend position-absolute d-flex align-items-center">
    <i style="background:#2fa84a"></i><span>Running</span><i style="background:#f00"></i><span>Stopped</span><i style="background:#ff9f00"></i><span>Stop ignition on</span><i style="background:#6b2f91"></i><span>GPS weak</span><i style="background:#1b2b30"></i><span>GPRS weak</span><i style="background:#a9a9a9"></i><span>Historical transmission</span><i style="background:#5a1a08"></i><span>Service expired</span><i style="background:#bdbdbd"></i><span>Not activated</span>
  </div>

  <div class="veil position-absolute"></div>

  <div class="dlg position-absolute">
    <div class="dlg-head d-flex align-items-center justify-content-between">Display info setting<svg width="12" height="12" viewBox="0 0 12 12" class="ln" stroke-width="1.300" style="color:#777"><path d="M.8.8l10.400 10.400M11.200.8L.8 11.200"/></svg></div>
    <div class="dlg-body d-flex align-items-start">
      <div class="vtabs"><div>List device</div><div>Device info box</div><div class="on">Tracking</div><div>History trips</div></div>
      <div class="fold">
        <div class="d-flex align-items-center"><svg width="10" height="10" viewBox="0 0 10 10" class="ln" stroke-width="1.300" style="margin-right:12px"><path d="M2 .8L8 5 2 9.200"/></svg>Base<div class="sw ms-auto"><i></i></div></div>
        <div class="d-flex align-items-center"><svg width="10" height="10" viewBox="0 0 10 10" class="ln" stroke-width="1.300" style="margin-right:12px"><path d="M2 .8L8 5 2 9.200"/></svg>Advance<div class="sw ms-auto"><i></i></div></div>
        <div class="d-flex align-items-center"><svg width="10" height="10" viewBox="0 0 10 10" class="ln" stroke-width="1.300" style="margin-right:12px"><path d="M2 .8L8 5 2 9.200"/></svg>Other data<div class="sw ms-auto"><i></i></div></div>
      </div>
    </div>
    <div class="dlg-foot d-flex justify-content-end" style="padding-right:24px"><div class="b b-save">Save</div><div class="b b-close">Close</div></div>
  </div>
</section>

<div class="frame" style="left:568px;top:8px;width:1334px;height:936px"></div>
<div class="frame" style="left:568px;top:60px;width:372px;height:557px"></div>
<div class="frame" style="left:883px;top:27px;width:57px;height:33px"></div>
<div class="frame" style="left:1091px;top:100px;width:752px;height:238px"></div>
<div class="frame" style="left:70px;top:574px;width:116px;height:26px"></div>
<div class="num" style="left:30px;top:567px">1</div>
<div class="num" style="left:842px;top:15px">2</div>
<div class="num" style="left:1446px;top:60px">3</div>
<div class="num" style="left:1640px;top:340px">4</div>
<div class="num" style="left:891px;top:576px">5</div>

<script>
// Map places: x, y, colour, glyph
const gray='#78909c', amber='#f29900', blue='#4285f4', pink='#ec5a8d';
const places=[[1210,13],[1189,51],[1287,41],[1536,25],[1028,230],[1064,300,gray,'port'],[952,322],[983,363],[968,468],[1038,568],[974,650,gray,'port'],[1203,642,'#6b70c4','P'],[1383,588],[1432,571],[1659,392],[1546,498],[1619,595,gray,'port'],[1486,625],[1814,402,amber,'food'],[1812,445,blue,'shop'],[1853,474,blue,'shop'],[1899,500,pink,'bed'],[1847,567,amber,'food'],[1885,90,amber,'food'],[1889,180,amber,'food'],[1868,348,gray,'school'],[1881,0,pink],[1365,0,blue],[1009,727],[1241,731],[1208,843],[1268,863],[1347,831],[1574,782],[1454,826],[1610,848]];
const glyph={
 port:'<path d="M0-6l6 3v1H-6v-1zM-5-1h10v1h-10zM-4 0h2v3h-2zM-1 0h2v3h-2zM2 0h2v3h-2zM-6 4H6v1.400H-6z"/>',
 food:'<path d="M-5-5h4v4l-1 1v5h-2V0l-1-1zM2-5c2 0 3 1 3 3v3H4v4H2z"/>',
 shop:'<path d="M-5-2H5v7H-5z"/><path d="M-2.500-2v-1a2.500 2.500 0 0 1 5 0v1" fill="none" stroke="#fff" stroke-width="1.300"/><path d="M-2 1a2 2 0 0 0 4 0" fill="none" stroke="#4285f4"/>',
 bed:'<path d="M-6-4h1.500v4H6v4H4.500V2h-9v2H-6zM-3-3h3v2h-3z"/>',
 school:'<path d="M0-5l7 3.500L0 2l-7-3.500zM-4 1l4 2 4-2v2.500L0 5.500-4 3.500z"/>',
 P:'<text x="0" y="5" text-anchor="middle" style="fill:#fff;stroke:none;font-weight:700">P</text>'};
document.getElementById('pins').innerHTML=places.map(([x,y,c=gray,g])=>`<g transform="translate(${x+.5} ${y+.3})"><use href="#pin" x="-11" y="-11" width="22" height="32" style="color:${c}"/>${g?glyph[g]:'<circle r="3.600"/>'}</g>`).join('');
</script>
<script src="https://cdn.jsdelivr.net/npm/bootstrap@5.3.0/dist/js/bootstrap.bundle.min.js"></script>
</body>
</html>
